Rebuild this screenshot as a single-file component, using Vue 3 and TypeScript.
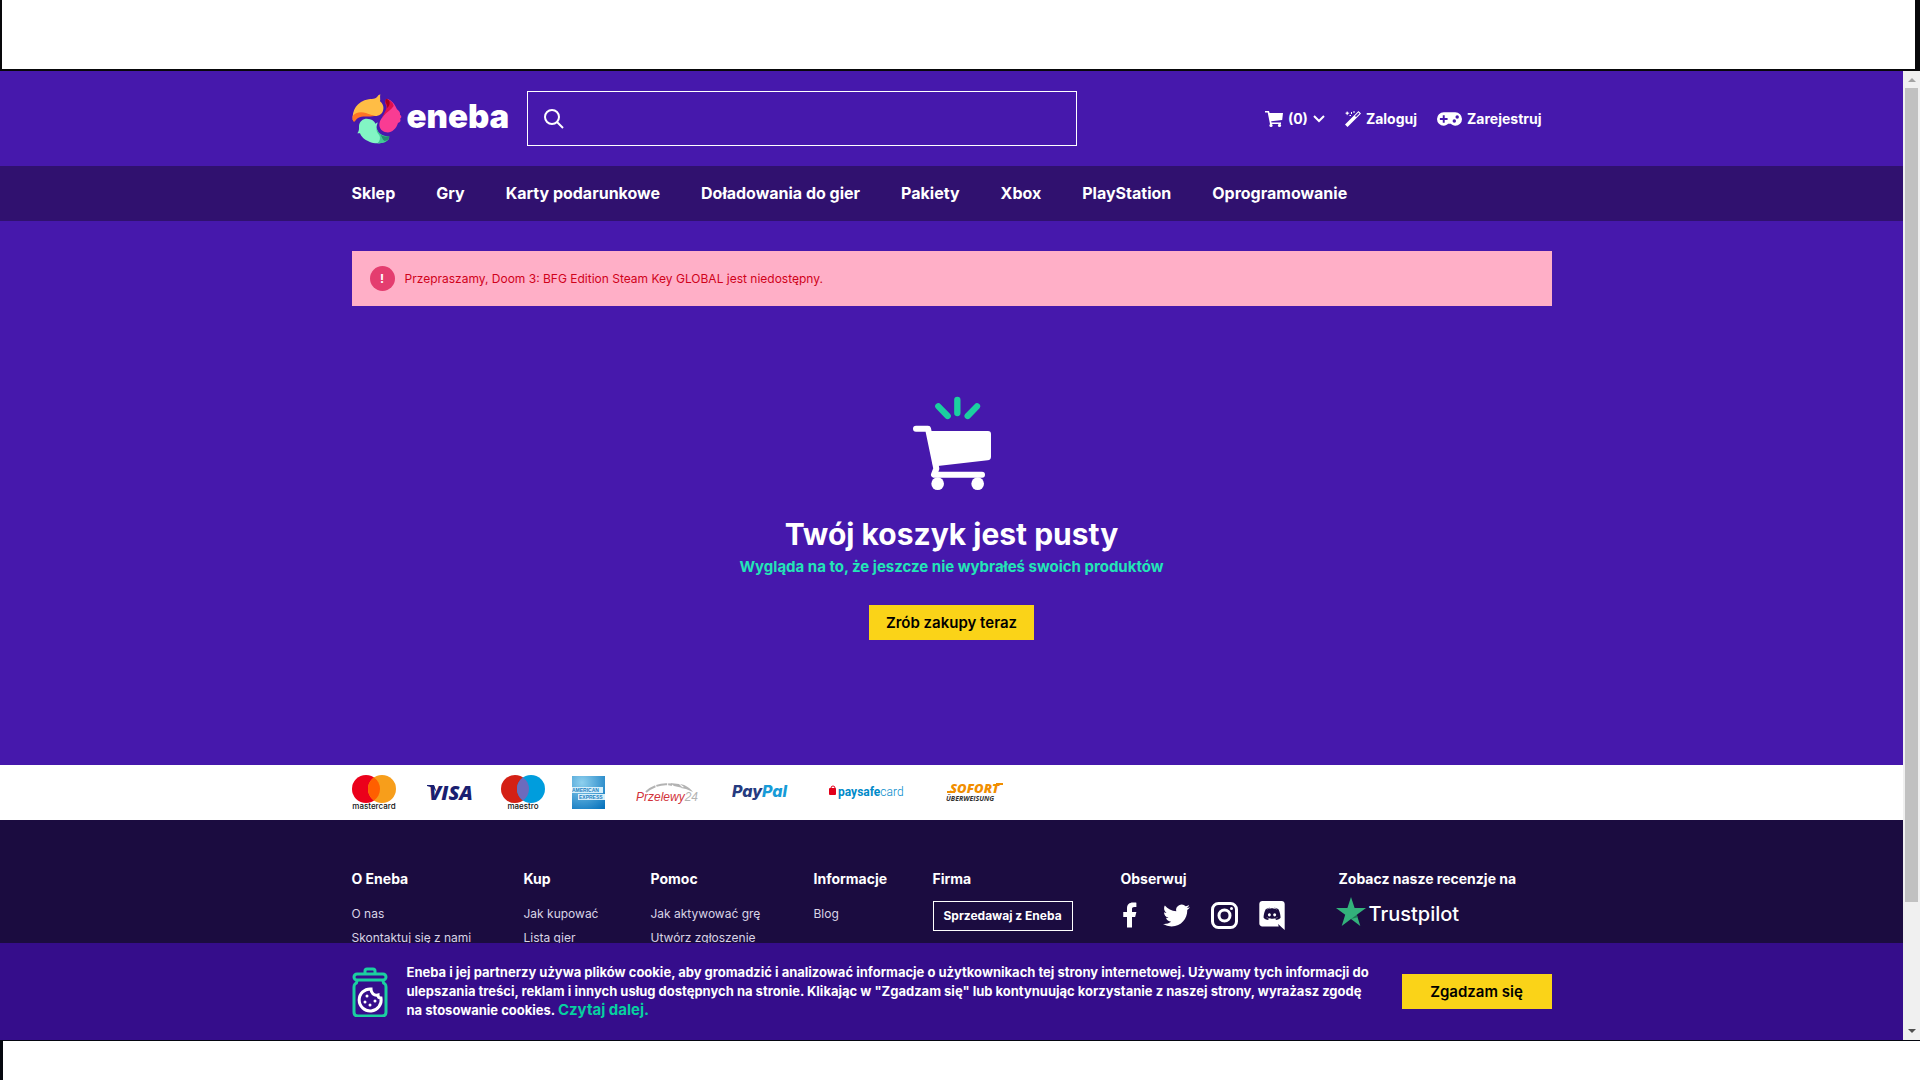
<script setup lang="ts">
interface FooterColumn {
  title: string
  links: string[]
}

const navLinks: string[] = [
  'Sklep',
  'Gry',
  'Karty podarunkowe',
  'Doładowania do gier',
  'Pakiety',
  'Xbox',
  'PlayStation',
  'Oprogramowanie',
]

const footerColumns: FooterColumn[] = [
  { title: 'O Eneba', links: ['O nas', 'Skontaktuj się z nami'] },
  { title: 'Kup', links: ['Jak kupować', 'Lista gier'] },
  { title: 'Pomoc', links: ['Jak aktywować grę', 'Utwórz zgłoszenie'] },
  { title: 'Informacje', links: ['Blog'] },
]
</script>

<template>
  <div class="screen">
    <div class="band band-top"></div>
    <div class="browser">
      <div class="page">
        <header class="header">
          <div class="container header-row">
            <a class="logo" href="#" aria-label="eneba">
              <svg class="logo-mark" viewBox="34 40 150 150" aria-hidden="true">
                <path fill="#ffbd45" d="M36 118C34 90 48 62 84 56C98 55 108 54 113 44L119 41C117 49 120 57 118 62C128 70 131 82 126 93C121 103 112 106 100 106C78 98 52 98 40 122Z" />
                <path fill="#ff7425" d="M36 106C42 96 60 92 76 97C86 101 96 105 104 105C84 110 64 104 52 112C46 116 44 122 40 124C36 120 35 112 36 106Z" />
                <path fill="#f93c93" d="M140 54C152 58 164 72 169 86C175 91 180 96 178 102C184 106 183 111 178 114C182 119 179 125 172 127C166 146 152 158 136 155C120 152 112 138 118 122C124 106 146 96 140 54Z" />
                <path fill="#e0104f" d="M137 54C152 60 158 68 159 76C150 90 136 94 124 112C130 96 142 84 136 74C132 66 133 58 137 54Z" />
                <path fill="#a8001c" d="M137 54C144 56 148 62 147 68C146 76 143 80 139 82C142 72 132 66 135 57Z" />
                <path fill="#82f5c4" d="M55 136C56 118 74 110 88 116C98 119 102 124 104 129L111 125C110 132 107 136 108 142C111 158 122 168 142 172C138 188 106 192 86 183C70 177 62 168 58 158L50 158C54 152 55 148 55 142Z" />
                <path fill="#42c994" d="M108 142C112 158 124 166 146 168L144 176C138 186 122 189 110 188C118 182 120 172 116 164C110 156 106 150 108 142Z" />
                <path fill="#238d70" d="M120 162C130 168 138 168 146 167C146 176 140 181 132 181C126 177 124 170 120 162Z" />
              </svg>
              <span class="logo-word">eneba</span>
            </a>
            <form class="search" role="search" @submit.prevent>
              <svg viewBox="0 0 20 20" width="20" height="20" fill="none" stroke="#fff" stroke-width="2" aria-hidden="true">
                <circle cx="8" cy="8" r="7" />
                <path d="M13 13l6 6" />
              </svg>
              <input type="text" aria-label="Szukaj" />
            </form>
            <div class="account">
              <button type="button" class="account-item">
                <svg viewBox="0 0 18 16" width="18" height="16" fill="#fff" aria-hidden="true">
                  <path d="M0 0h4l.6 2H18l-.8 7-11 1.2.3 1.3H16V13H5L2.7 1.500H0z" />
                  <circle cx="6" cy="14.400" r="1.600" />
                  <circle cx="14.500" cy="14.400" r="1.600" />
                </svg>
                <span>(0)</span>
                <svg viewBox="0 0 12 8" width="12" height="8" fill="none" stroke="#fff" stroke-width="2" aria-hidden="true">
                  <path d="M1 1l5 5 5-5" />
                </svg>
              </button>
              <a class="account-item" href="#">
                <svg viewBox="0 0 16 16" width="16" height="16" fill="#fff" aria-hidden="true">
                  <path fill-rule="evenodd" d="M13.500 0L16 2.500 2.500 16 0 13.500zM13.400 1.600L10 5l1 1 3.500-3.400z" />
                  <path d="M2 0l1 1.500L4.500 2 3 3 2 4.500 1.500 3 0 2l1.500-.5zM6 1h1v2H6zM8.500 0h1v2h-1zM4.500 4h1.500v1H4.500z" />
                </svg>
                <span>Zaloguj</span>
              </a>
              <a class="account-item" href="#">
                <svg viewBox="0 0 26 14" width="25" height="14" aria-hidden="true">
                  <path fill="#fff" d="M7 0h12a7 7 0 110 14c-2 0-3.500-1-4.500-2h-3c-1 1-2.500 2-4.500 2A7 7 0 117 0z" />
                  <path fill="none" stroke="#4618ac" stroke-width="2" d="M7 3v8M3 7h8" />
                  <circle cx="21" cy="5" r="1.800" fill="#4618ac" />
                  <circle cx="18" cy="9" r="1.800" fill="#4618ac" />
                </svg>
                <span>Zarejestruj</span>
              </a>
            </div>
          </div>
        </header>

        <nav class="nav">
          <div class="container nav-row">
            <a v-for="link in navLinks" :key="link" href="#">{{ link }}</a>
          </div>
        </nav>

        <main class="main">
          <div class="container">
            <div class="alert" role="alert">
              <span class="alert-icon">!</span>
              <span>Przepraszamy, Doom 3: BFG Edition Steam Key GLOBAL jest niedostępny.</span>
            </div>
            <section class="empty">
              <svg class="empty-cart" viewBox="575 45 240 288" aria-hidden="true">
                <g fill="none" stroke="#1bcfa0" stroke-width="19" stroke-linecap="round">
                  <path d="M654 79L682 108M711 60V99M770 79L742 108" />
                </g>
                <g fill="none" stroke="#fff" stroke-width="18" stroke-linecap="round" stroke-linejoin="round">
                  <path d="M587 146H623L648 266L641 284H785" />
                </g>
                <path fill="#fff" d="M622 153H803Q812 153 812 162V230Q812 240 802 241L652 258L638 255Z" />
                <circle cx="652" cy="311" r="19" fill="#fff" />
                <circle cx="772" cy="311" r="19" fill="#fff" />
              </svg>
              <h1>Twój koszyk jest pusty</h1>
              <p>Wygląda na to, że jeszcze nie wybrałeś swoich produktów</p>
              <button type="button" class="yellow">Zrób zakupy teraz</button>
            </section>
          </div>
        </main>

        <section class="payments">
          <div class="container payments-row">
            <svg width="48" height="36" viewBox="0 0 48 36" role="img">
              <circle cx="14" cy="14" r="14" fill="#eb001b" />
              <circle cx="30" cy="14" r="14" fill="#f79e1b" />
              <path fill="#ff5f00" d="M22 2.500a14 14 0 010 23 14 14 0 010-23z" />
              <text x="22" y="34" class="caption">mastercard</text>
            </svg>
            <svg width="47" height="36" viewBox="0 0 47 36" role="img">
              <text x="2" y="25" class="visa">VISA</text>
              <path fill="#1a1f71" d="M0 10h7l3 8c-2-4-5-6-10-7z" />
            </svg>
            <svg width="44" height="36" viewBox="0 0 44 36" role="img">
              <circle cx="14" cy="14" r="14" fill="#d42015" />
              <circle cx="30" cy="14" r="14" fill="#009ddd" />
              <path fill="#6c6bbd" d="M22 2.500a14 14 0 010 23 14 14 0 010-23z" />
              <text x="22" y="34" class="caption">maestro</text>
            </svg>
            <svg width="37" height="36" viewBox="0 0 37 36" role="img">
              <defs>
                <radialGradient id="amex" cx=".3" cy=".2" r="1">
                  <stop offset="0" stop-color="#8ed0ee" />
                  <stop offset="1" stop-color="#0873bd" />
                </radialGradient>
              </defs>
              <rect y="1" width="33" height="33" fill="url(#amex)" />
              <rect y="12" width="31" height="6" fill="#d7effa" />
              <rect x="6" y="19" width="27" height="6" fill="#d7effa" />
              <text x="0" y="17" class="amex">AMERICAN</text>
              <text x="7" y="24" class="amex">EXPRESS</text>
            </svg>
            <svg width="69" height="36" viewBox="0 0 69 36" role="img">
              <path fill="none" stroke="#b3b3b3" stroke-width="2" d="M10 17C18 10 28 8 36 10" stroke-dasharray="11 1" />
              <path fill="#b3b3b3" d="M34 8l9 1 4 4-9-2zM44 9c6 1 10 4 13 8l-7-3-5-1 3-1z" />
              <text x="0" y="26" class="p24">Przelewy<tspan fill="#b3b3b3">24</tspan></text>
            </svg>
            <svg width="70" height="36" viewBox="0 0 70 36" role="img">
              <text x="0" y="22" class="paypal">Pay<tspan fill="#179bd7">Pal</tspan></text>
            </svg>
            <svg width="90" height="36" viewBox="0 0 90 36" role="img">
              <path fill="none" stroke="#e2001a" stroke-width="1" d="M2 15v-2q0-2 2-2t2 2v2" />
              <rect y="13" width="7" height="7" rx="1" fill="#e2001a" />
              <text x="9" y="21" class="psc">paysafe<tspan class="thin">card</tspan></text>
            </svg>
            <svg width="60" height="36" viewBox="0 0 60 36" role="img">
              <path stroke="#f18e00" stroke-width="2" d="M1 17h8M50 9h7" />
              <text x="4" y="18" class="sofort">SOFORT</text>
              <text x="0" y="26" class="uber">ÜBERWEISUNG</text>
            </svg>
          </div>
        </section>

        <footer class="footer">
          <div class="container footer-grid">
            <div v-for="column in footerColumns" :key="column.title">
              <h2>{{ column.title }}</h2>
              <ul>
                <li v-for="link in column.links" :key="link"><a href="#">{{ link }}</a></li>
              </ul>
            </div>
            <div>
              <h2>Firma</h2>
              <a class="sell" href="#">Sprzedawaj z Eneba</a>
            </div>
            <div>
              <h2>Obserwuj</h2>
              <div class="social">
                <a href="#" aria-label="Facebook">
                  <svg width="15" height="26" viewBox="6 2 12 20" fill="#fff"><path d="M14 13.500h2.500l1-4H14v-2c0-1.030 0-2 2-2h1.500V2.140c-.326-.043-1.557-.14-2.857-.14C11.928 2 10 3.657 10 6.700v2.800H7v4h3V22h4v-8.500z" /></svg>
                </a>
                <a href="#" aria-label="Twitter">
                  <svg width="27" height="27" viewBox="0 0 24 24" fill="#fff"><path d="M23.953 4.570a10 10 0 01-2.825.775 4.958 4.958 0 002.163-2.723c-.951.555-2.005.959-3.127 1.184a4.920 4.920 0 00-8.384 4.482C7.690 8.095 4.067 6.130 1.640 3.162a4.822 4.822 0 00-.666 2.475c0 1.710.87 3.213 2.188 4.096a4.904 4.904 0 01-2.228-.616v.06a4.923 4.923 0 003.946 4.827 4.996 4.996 0 01-2.212.085 4.936 4.936 0 004.604 3.417 9.867 9.867 0 01-6.102 2.105c-.39 0-.779-.023-1.170-.067a13.995 13.995 0 007.557 2.209c9.053 0 13.998-7.496 13.998-13.985 0-.21 0-.42-.015-.63A9.935 9.935 0 0024 4.590z" /></svg>
                </a>
                <a href="#" aria-label="Instagram">
                  <svg width="27" height="27" viewBox="0 0 27 27" fill="none" stroke="#fff" stroke-width="3">
                    <rect x="1.500" y="1.500" width="24" height="24" rx="6" />
                    <circle cx="13.500" cy="13.500" r="5.500" />
                    <circle cx="20.500" cy="6.500" r="1.500" fill="#fff" stroke="none" />
                  </svg>
                </a>
                <a href="#" aria-label="Discord">
                  <svg width="26" height="29" viewBox="1 0 21 24" fill="#fff"><path d="M19.540 0c1.356 0 2.460 1.104 2.460 2.472v21.528l-2.580-2.280-1.452-1.344-1.536-1.428.636 2.220h-13.608c-1.356 0-2.460-1.104-2.460-2.472v-16.224c0-1.368 1.104-2.472 2.460-2.472h16.080zm-4.632 15.672c2.652-.084 3.672-1.824 3.672-1.824 0-3.864-1.728-6.996-1.728-6.996-1.728-1.296-3.372-1.260-3.372-1.260l-.168.192c2.040.624 2.988 1.524 2.988 1.524-1.248-.684-2.472-1.020-3.612-1.152-.864-.096-1.692-.072-2.424.024l-.204.024c-.42.036-1.440.192-2.724.756-.444.204-.708.348-.708.348s.996-.948 3.156-1.572l-.12-.144s-1.644-.036-3.372 1.260c0 0-1.728 3.132-1.728 6.996 0 0 1.008 1.740 3.660 1.824 0 0 .444-.54.804-.996-1.524-.456-2.100-1.416-2.100-1.416l.336.204.048.036.047.027.014.006.047.027c.3.168.6.3.876.408.492.192 1.080.384 1.764.516.9.168 1.956.228 3.108.012.564-.096 1.140-.264 1.740-.516.42-.156.888-.384 1.380-.708 0 0-.6.984-2.172 1.428.36.456.792.972.792.972zm-5.580-5.604c-.684 0-1.224.6-1.224 1.332 0 .732.552 1.332 1.224 1.332.684 0 1.224-.6 1.224-1.332.012-.732-.54-1.332-1.224-1.332zm4.380 0c-.684 0-1.224.6-1.224 1.332 0 .732.552 1.332 1.224 1.332.684 0 1.224-.6 1.224-1.332 0-.732-.54-1.332-1.224-1.332z" /></svg>
                </a>
              </div>
            </div>
            <div>
              <h2>Zobacz nasze recenzje na</h2>
              <a class="trustpilot" href="#">
                <svg width="30" height="29" viewBox="0 0 30 29" aria-hidden="true">
                  <path fill="#33b27b" d="M15 0l3.600 11H30l-9.200 6.800L24.300 29 15 22.100 5.700 29l3.500-11.200L0 11h11.400z" />
                  <path fill="#1c7a55" d="M21.600 20.300l-.8-2.500-5.800 4.300z" />
                </svg>
                <span>Trustpilot</span>
              </a>
            </div>
          </div>
        </footer>

        <aside class="cookies">
          <div class="container cookies-row">
            <svg width="36" height="50" viewBox="0 0 36 50" fill="none" stroke="#1bcfa0" stroke-width="3" aria-hidden="true">
              <path d="M13 6V4q0-2 2-2h6q2 0 2 2v2" />
              <rect x="2" y="7" width="32" height="6" rx="3" />
              <path d="M5 14q0 2-2 3-1 1-1 3v25q0 4 4 4h24q4 0 4-4V20q0-2-1-3-2-1-2-3" />
              <path stroke="#fff" d="M19 22a11 11 0 1010 9c-2 0-3-1-3-3-4 1-7-2-7-6z" />
              <g fill="#fff" stroke="none">
                <circle cx="15" cy="29" r="1.500" />
                <circle cx="13" cy="35" r="1.500" />
                <circle cx="18" cy="38" r="1.500" />
                <circle cx="23" cy="34" r="1.500" />
              </g>
            </svg>
            <p>
              Eneba i jej partnerzy używa plików cookie, aby gromadzić i analizować informacje o użytkownikach tej strony internetowej. Używamy tych informacji do
              ulepszania treści, reklam i innych usług dostępnych na stronie. Klikając w "Zgadzam się" lub kontynuując korzystanie z naszej strony, wyrażasz zgodę
              na stosowanie cookies. <a href="#">Czytaj dalej.</a>
            </p>
            <button type="button" class="yellow agree">Zgadzam się</button>
          </div>
        </aside>
      </div>

      <div class="scrollbar" aria-hidden="true">
        <span class="arrow up"></span>
        <span class="thumb"></span>
        <span class="arrow down"></span>
      </div>
    </div>
    <div class="band band-bottom"></div>
  </div>
</template>

<style>
body {
  margin: 0;
  background: #fff;
}
</style>

<style scoped>
.screen {
  display: flex;
  flex-direction: column;
  height: 100vh;
  font-family: Inter, "Noto Sans", sans-serif;
  color: #fff;
}
.screen a {
  color: inherit;
  text-decoration: none;
}
button {
  font-family: inherit;
  cursor: pointer;
}
svg {
  display: block;
  flex: none;
}
.band {
  flex: none;
  box-sizing: border-box;
  background: #fff;
}
.band-top {
  height: 71px;
  border: solid #08080a;
  border-width: 0 5px 2px 2px;
}
.band-bottom {
  height: 40px;
  border: solid #05070f;
  border-width: 1px 0 0 3px;
}
.browser {
  display: flex;
  flex: 1;
  min-height: 0;
}
.page {
  display: flex;
  flex: 1;
  flex-direction: column;
  min-width: 0;
  background: #4618ac;
}
.container {
  width: 100%;
  max-width: 1200px;
  margin: 0 auto;
}

.header {
  padding: 20px 0;
}
.header-row {
  display: flex;
  align-items: center;
}
.logo {
  display: flex;
  align-items: center;
  width: 175px;
}
.logo-mark {
  width: 50px;
  height: 50px;
}
.logo-word {
  margin: -6px 0 0 5px;
  font: 900 33px/44px Inter, sans-serif;
}
.search {
  display: flex;
  align-items: center;
  box-sizing: border-box;
  width: 550px;
  height: 55px;
  padding-left: 16px;
  border: 1px solid #fff;
}
.search input {
  flex: 1;
  margin: 0 12px;
  border: 0;
  outline: 0;
  background: none;
  color: #fff;
  font: 16px Inter, sans-serif;
}
.account {
  display: flex;
  gap: 20px;
  margin-left: auto;
  padding-right: 10px;
}
.account-item {
  display: flex;
  align-items: center;
  gap: 5px;
  padding: 0;
  border: 0;
  background: none;
  color: #fff;
  font-size: 14px;
  font-weight: 700;
  line-height: 20px;
}

.nav {
  background: #30116f;
}
.nav-row {
  display: flex;
  gap: 41px;
  font-size: 16px;
  font-weight: 700;
  line-height: 55px;
}

.main {
  flex: none;
  box-sizing: border-box;
  min-height: 544px;
  padding-top: 30px;
}
.alert {
  display: flex;
  align-items: center;
  gap: 10px;
  height: 55px;
  padding-left: 18px;
  background: #ffafc7;
  color: #d0021b;
  font-size: 12px;
}
.alert-icon {
  width: 25px;
  border-radius: 50%;
  background: #e43d6f;
  color: #fff;
  font-weight: 700;
  line-height: 25px;
  text-align: center;
}
.empty {
  display: flex;
  flex-direction: column;
  align-items: center;
  padding-top: 89px;
}
.empty-cart {
  width: 80px;
  height: 96px;
}
.empty h1 {
  margin: 23px 0 0;
  font-size: 30px;
  line-height: 40px;
}
.empty p {
  margin: 3px 0 28px;
  color: #23e5b7;
  font-size: 15px;
  font-weight: 700;
  line-height: 20px;
}
.yellow {
  min-width: 165px;
  height: 35px;
  padding: 0 15px;
  border: 0;
  background: #fad318;
  color: #000;
  font-size: 15px;
  font-weight: 600;
}

.payments {
  flex: none;
  background: #fff;
}
.payments-row {
  display: flex;
  gap: 27px;
  padding: 10px 0 9px;
}
.caption {
  fill: #111;
  font: 500 8px Inter, sans-serif;
  text-anchor: middle;
}
.visa {
  fill: #1a1f71;
  font: italic 800 20px "Open Sans", sans-serif;
}
.amex {
  fill: #1c7fc2;
  font: 700 5px "Liberation Sans", sans-serif;
}
.p24 {
  fill: #d13239;
  font: italic 12px "Liberation Sans", sans-serif;
}
.paypal {
  fill: #253b80;
  font: italic 800 16px Inter, sans-serif;
}
.psc {
  fill: #008ac9;
  font: 700 12px Roboto, sans-serif;
}
.thin {
  font-weight: 300;
}
.sofort {
  fill: #f18e00;
  font: italic 800 13px "Open Sans", sans-serif;
}
.uber {
  fill: #333;
  font: italic 700 7px "Open Sans", sans-serif;
}

.footer {
  flex: 1;
  min-height: 0;
  overflow: hidden;
  background: #1b0c40;
}
.footer-grid {
  display: grid;
  grid-template-columns: 172fr 127fr 163fr 119fr 188fr 218fr 213fr;
  padding-top: 48px;
}
.footer h2 {
  margin: 0 0 11px;
  font-size: 14px;
  line-height: 22px;
  white-space: nowrap;
}
.footer ul {
  margin: 12px 0 0;
  padding: 0;
  list-style: none;
  color: #d9d4e6;
  font-size: 12px;
  line-height: 24px;
}
.sell {
  display: inline-block;
  padding: 0 10px;
  border: 1px solid #fff;
  font-size: 12px;
  font-weight: 700;
  line-height: 28px;
}
.social {
  display: flex;
  align-items: center;
  gap: 21px;
  height: 28px;
}
.social a:first-child {
  margin: 0 5px 0 1px;
}
.trustpilot {
  display: flex;
  align-items: center;
  gap: 3px;
  margin: -5px 0 0 -3px;
  font: 500 20px/24px Inter, sans-serif;
}
.trustpilot span {
  padding-top: 6px;
}

.cookies {
  flex: none;
  padding: 20px 0;
  background: #350d8b;
}
.cookies-row {
  display: flex;
  align-items: center;
}
.cookies p {
  width: 968px;
  margin: 0 0 0 19px;
  font-size: 13px;
  font-weight: 700;
  line-height: 19px;
}
.cookies p a {
  color: #07cfa0;
  font-size: 15px;
  line-height: 16px;
}
.agree {
  flex: none;
  min-width: 150px;
  margin-left: auto;
}

.scrollbar {
  display: flex;
  flex: none;
  flex-direction: column;
  align-items: center;
  box-sizing: border-box;
  width: 17px;
  background: #f0f0f0;
}
.thumb {
  flex: 0 0 84%;
  width: 13px;
  background: #c1c1c1;
}
.arrow {
  border: solid transparent;
  border-width: 4px;
}
.up {
  margin: 3px 0 6px;
  border-bottom-color: #a3a3a3;
}
.down {
  margin: auto 0 3px;
  border-top-color: #505050;
}
</style>
